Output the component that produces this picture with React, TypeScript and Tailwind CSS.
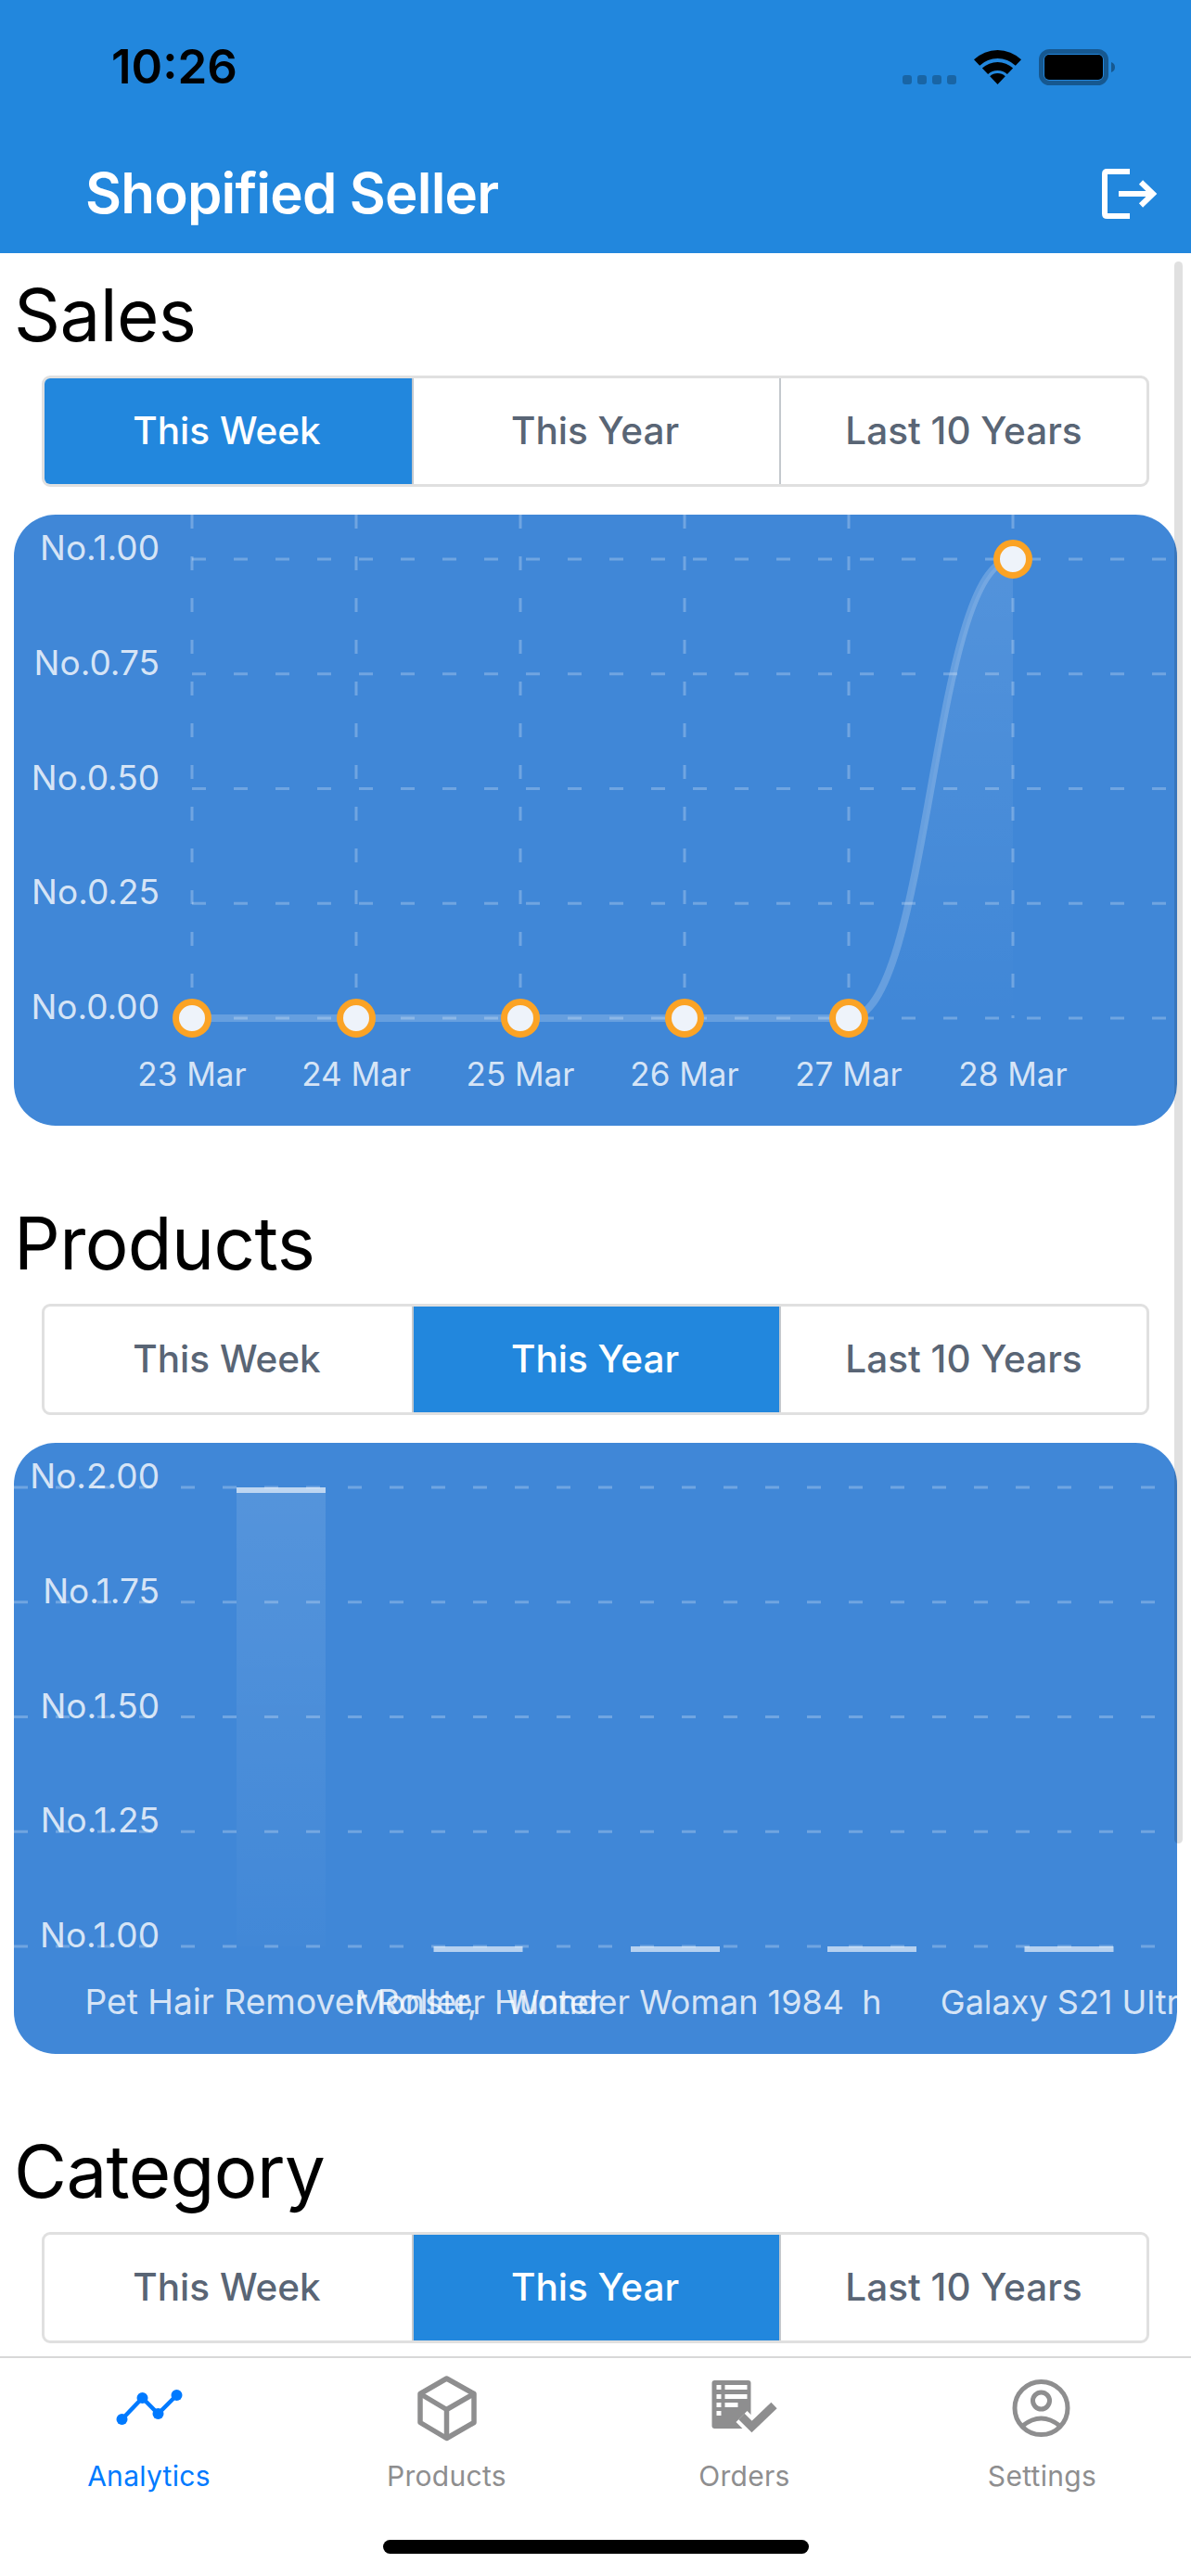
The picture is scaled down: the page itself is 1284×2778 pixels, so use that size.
import React from 'react';

const RANGES = ['This Week', 'This Year', 'Last 10 Years'];
const GRID_Y = [48, 171.75, 295.5, 419.25, 543];
const LINE_X = [192, 369, 546, 723, 900, 1077];
const DAYS = ['23 Mar', '24 Mar', '25 Mar', '26 Mar', '27 Mar', '28 Mar'];
const BARS = [
  { x: 240, label: 'Pet Hair Remover Roller,', top: true, size: 37.2 },
  { x: 452.5, label: 'Monster Hunter', size: 36 },
  { x: 665, label: 'Wonder Woman 1984', size: 36 },
  { x: 877, label: 'h', size: 36 },
  { x: 1089.5, label: 'Galaxy S21 Ultra', size: 36 },
];

const Segmented: React.FC<{ active: number }> = ({ active }) => (
  <div className="mx-[45px] grid h-[120px] w-[1194px] grid-cols-3 overflow-hidden rounded-[9px] border-[3px] border-[#e0e0e0] bg-white">
    {RANGES.map((r, i) => (
      <div
        key={r}
        className={`flex items-center justify-center text-[40.5px] font-medium ${i > 0 ? 'border-l-2 border-[#c3c8cd]' : ''} ${i === active ? 'bg-[#2287dd] text-white' : 'text-[#596575]'}`}
      >
        <span className={i < 2 ? 'mr-[3px]' : ''}>{r}</span>
      </div>
    ))}
  </div>
);

const SectionTitle: React.FC<{ children: React.ReactNode }> = ({ children }) => (
  <h2 className="flex h-[132px] items-center pl-[15px] text-[78px] font-normal tracking-[-0.6px] text-black">{children}</h2>
);

const YLabels: React.FC<{ labels: string[] }> = ({ labels }) => (
  <>
    {labels.map((l, i) => (
      <text key={l} x={157} y={GRID_Y[i] + 1} textAnchor="end" fontSize={37} fill="#fff" fillOpacity={0.8}>
        {l}
      </text>
    ))}
  </>
);

const LineChart: React.FC = () => (
  <div className="mx-[15px] h-[659px] w-[1254px] overflow-hidden rounded-[45px] bg-[#4087d7]">
    <svg viewBox="0 0 1254 659" className="block h-full w-full">
      <defs>
        <linearGradient id="area" x1="0" y1="0" x2="0" y2="1">
          <stop offset="0" stopColor="#fff" stopOpacity="0.1" />
          <stop offset="1" stopColor="#fff" stopOpacity="0" />
        </linearGradient>
      </defs>
      {GRID_Y.map((y) => (
        <line key={y} x1={192} x2={1245} y1={y} y2={y} stroke="#fff" strokeOpacity={0.25} strokeWidth={3} strokeDasharray="15 30" />
      ))}
      {LINE_X.map((x) => (
        <line key={x} x1={x} x2={x} y1={0} y2={543} stroke="#fff" strokeOpacity={0.25} strokeWidth={3} strokeDasharray="15 30" />
      ))}
      <path d="M900 543C988.5 543 988.5 48 1077 48L1077 543Z" fill="url(#area)" />
      <path d="M192 543L900 543C988.5 543 988.5 48 1077 48" fill="none" stroke="#fff" strokeOpacity={0.2} strokeWidth={8} />
      {LINE_X.map((x, i) => (
        <circle key={x} cx={x} cy={i === 5 ? 48 : 543} r={17.5} fill="#eef3fa" stroke="#fba325" strokeWidth={7} />
      ))}
      <YLabels labels={['No.1.00', 'No.0.75', 'No.0.50', 'No.0.25', 'No.0.00']} />
      {DAYS.map((d, i) => (
        <text key={d} x={LINE_X[i]} y={616} textAnchor="middle" fontSize={35} fill="#fff" fillOpacity={0.8}>
          {d}
        </text>
      ))}
    </svg>
  </div>
);

const BarChart: React.FC = () => (
  <div className="mx-[15px] h-[659px] w-[1254px] overflow-hidden rounded-[45px] bg-[#4087d7]">
    <svg viewBox="0 0 1254 659" className="block h-full w-full">
      <defs>
        <linearGradient id="bar" x1="0" y1="0" x2="0" y2="1">
          <stop offset="0" stopColor="#fff" stopOpacity="0.11" />
          <stop offset="1" stopColor="#fff" stopOpacity="0.01" />
        </linearGradient>
      </defs>
      {GRID_Y.map((y) => (
        <line key={y} x1={0} x2={1245} y1={y} y2={y} stroke="#fff" strokeOpacity={0.25} strokeWidth={3} strokeDasharray="15 30" />
      ))}
      {BARS.map((b) => (
        <g key={b.label}>
          {b.top && <rect x={b.x} y={48} width={96} height={495} fill="url(#bar)" />}
          <rect x={b.x} y={b.top ? 48 : 543} width={96} height={6} fill="#fff" fillOpacity={0.62} />
        </g>
      ))}
      <YLabels labels={['No.2.00', 'No.1.75', 'No.1.50', 'No.1.25', 'No.1.00']} />
      {BARS.map((b) => (
        <text key={b.label} x={b.x + 48} y={616} textAnchor="middle" fontSize={b.size} fill="#fff" fillOpacity={0.8}>
          {b.label}
        </text>
      ))}
    </svg>
  </div>
);

const StatusIcons: React.FC = () => (
  <svg viewBox="973 50 230 44" className="mr-[81px] ml-auto h-[44px] w-[230px]">
    {[973, 989, 1005, 1021].map((x) => (
      <rect key={x} x={x} y={81} width={10} height={10} rx={3} fill="#000" fillOpacity={0.25} />
    ))}
    <path d="M1050 64.2A37 37 0 0 1 1101 64.2L1094.8 70.7A28 28 0 0 0 1056.2 70.7Z" />
    <path d="M1058.9 73.6A24 24 0 0 1 1092.1 73.6L1085.9 80.1A15 15 0 0 0 1065.1 80.1Z" />
    <path d="M1067.2 82.3A12 12 0 0 1 1083.8 82.3L1075.5 91Z" />
    <rect x={1122.5} y={55.5} width={70} height={34} rx={9} fill="none" stroke="#000" strokeOpacity={0.35} strokeWidth={5} />
    <rect x={1126} y={59} width={63} height={27} rx={5} />
    <path d="M1198 67C1201 68 1202 70 1202 72.5C1202 75 1201 77 1198 78Z" fillOpacity={0.35} />
  </svg>
);

const LogoutIcon: React.FC = () => (
  <svg viewBox="1188 180 60 54" className="h-[54px] w-[60px]" fill="none" stroke="#fff" strokeWidth={6}>
    <path d="M1218 183H1193.5Q1191 183 1191 185.5V228.5Q1191 231 1193.5 231H1218" />
    <path d="M1206 207H1243M1230 194.5L1243 207L1230 219.5" />
  </svg>
);

const AnalyticsIcon: React.FC = () => (
  <svg viewBox="120.5 2557 80 80" className="h-[80px] w-[80px]" fill="#007aff">
    <path d="M131 2609L153 2586L170 2603L190 2583" fill="none" stroke="#007aff" strokeWidth={4.5} />
    <circle cx={131} cy={2609} r={6} />
    <circle cx={153} cy={2586} r={6} />
    <circle cx={170} cy={2603} r={6} />
    <circle cx={190} cy={2583} r={6} />
  </svg>
);

const ProductsIcon: React.FC = () => (
  <svg viewBox="441.5 2557 80 80" className="h-[80px] w-[80px]" fill="none" stroke="#8e8e8f" strokeWidth={5.5} strokeLinejoin="round">
    <path d="M481 2565L510.5 2581.5V2612.5L481 2629.5L452.5 2612.5V2581.5Z" />
    <path d="M452.5 2581.5L481 2598.5L510.5 2581.5M481 2598.5V2629.5" />
  </svg>
);

const OrdersIcon: React.FC = () => (
  <svg viewBox="762.5 2557 80 80" className="h-[80px] w-[80px]">
    <rect x={767} y={2567} width={42} height={52} rx={3} fill="#8e8e8f" />
    {[2572, 2582, 2591, 2600].map((y) => (
      <rect key={y} x={772} y={y} width={5} height={5} fill="#fff" />
    ))}
    <rect x={781} y={2572} width={24} height={5} fill="#fff" />
    <rect x={781} y={2582} width={24} height={5} fill="#fff" />
    <rect x={781} y={2591} width={14} height={5} fill="#fff" />
    <path d="M799 2606L810 2617L834 2594" fill="none" stroke="#fff" strokeWidth={17} />
    <path d="M799 2606L810 2617L834 2594" fill="none" stroke="#8e8e8f" strokeWidth={9} />
  </svg>
);

const SettingsIcon: React.FC = () => (
  <svg viewBox="1084.5 2557 80 80" className="h-[80px] w-[80px]" fill="none" stroke="#8e8e8f" strokeWidth={5}>
    <circle cx={1123} cy={2597} r={28.5} />
    <circle cx={1123} cy={2589} r={9} />
    <path d="M1103 2616Q1123 2600 1143 2616" />
  </svg>
);

const TABS = [
  { label: 'Analytics', Icon: AnalyticsIcon, color: 'text-[#007aff]' },
  { label: 'Products', Icon: ProductsIcon, color: 'text-[#8e8e8f]' },
  { label: 'Orders', Icon: OrdersIcon, color: 'text-[#8e8e8f]' },
  { label: 'Settings', Icon: SettingsIcon, color: 'text-[#8e8e8f]' },
];

const App: React.FC = () => (
  <div className="flex h-[2778px] w-[1284px] flex-col overflow-hidden bg-white [font-family:Inter,sans-serif]">
    <header className="h-[273px] shrink-0 bg-[#2287dd]">
      <div className="flex h-[144px] items-center pl-[120px]">
        <span className="text-[51px] font-semibold text-black">10:26</span>
        <StatusIcons />
      </div>
      <div className="flex h-[129px] items-center justify-between pr-[36px] pl-[92px]">
        <h1 className="mb-[2px] text-[60px] font-semibold tracking-[-0.8px] text-white">Shopified Seller</h1>
        <LogoutIcon />
      </div>
    </header>

    <main className="relative min-h-0 flex-1 overflow-hidden">
      <section className="pb-[60px]">
        <SectionTitle>Sales</SectionTitle>
        <Segmented active={0} />
        <div className="mt-[30px]">
          <LineChart />
        </div>
      </section>
      <section className="pb-[60px]">
        <SectionTitle>Products</SectionTitle>
        <Segmented active={1} />
        <div className="mt-[30px]">
          <BarChart />
        </div>
      </section>
      <section>
        <SectionTitle>Category</SectionTitle>
        <Segmented active={1} />
      </section>
      <div className="absolute top-[9px] right-[9px] h-[1706px] w-[9px] rounded-full bg-black/12" />
    </main>

    <nav className="h-[237px] shrink-0 border-t-2 border-[#d8d8d8] bg-white pt-[14px]">
      <div className="grid grid-cols-4">
        {TABS.map(({ label, Icon, color }) => (
          <div key={label} className="flex flex-col items-center">
            <Icon />
            <span className={`mt-[15px] text-[30px] leading-[36px] tracking-[0.3px] ${color}`}>{label}</span>
          </div>
        ))}
      </div>
      <div className="mx-auto mt-[51px] h-[15px] w-[459px] rounded-full bg-black" />
    </nav>
  </div>
);

export default App;
